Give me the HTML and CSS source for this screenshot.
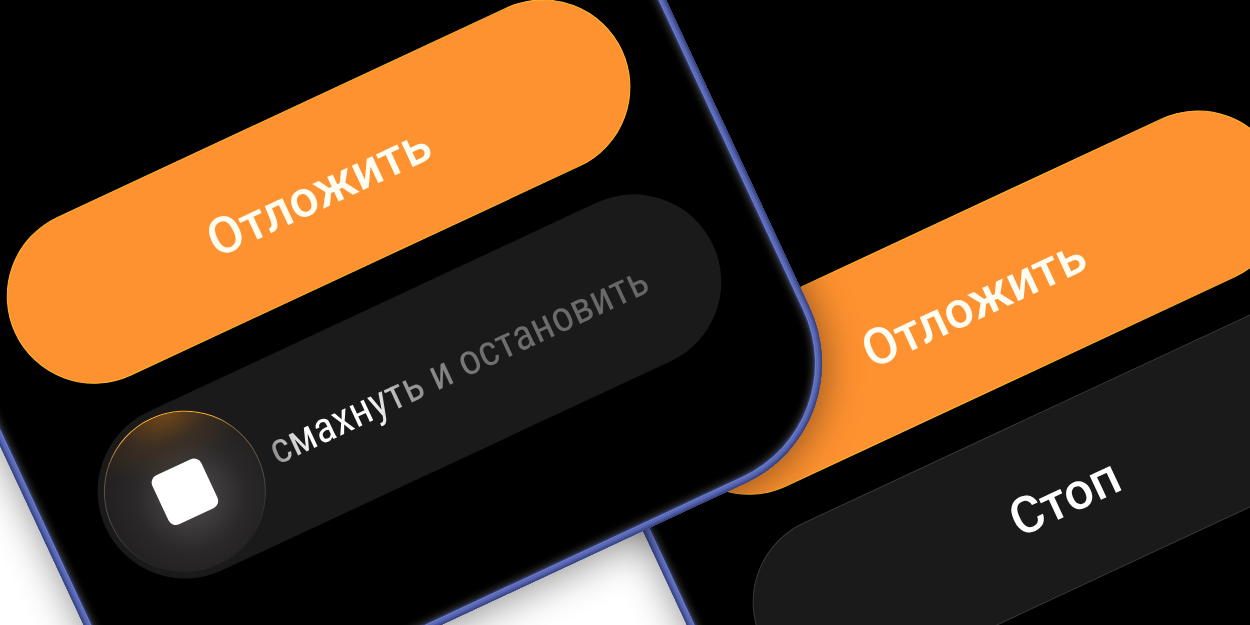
FILE: index.html
```
<!DOCTYPE html>
<html lang="ru">
<head>
    <meta charset="UTF-8">
    <meta name="viewport" content="width=device-width, initial-scale=1.0">
    <title>Будильник</title>
    <link rel="stylesheet" href="styles.css">
</head>
<body>

<main class="canvas">
    <section class="phone phone-back">
        <button class="pill snooze" type="button">Отложить</button>
        <button class="pill stop" type="button">Стоп</button>
    </section>

    <section class="phone phone-front">
        <button class="pill snooze" type="button">Отложить</button>
        <div class="pill slider">
            <button class="knob" type="button" aria-labelledby="swipe-text">
                <span class="stop-icon"></span>
            </button>
            <span class="swipe-text" id="swipe-text">смахнуть и остановить</span>
        </div>
    </section>
</main>

</body>
</html>
```
FILE: styles.css
```
body {
    margin: 0;
    background: #fff;
    font-family: Roboto, "Liberation Sans", sans-serif;
}
.canvas {
    position: relative;
    height: 100vh;
    overflow: hidden;
}

/* phones */
.phone {
    position: absolute;
    box-sizing: border-box;
    width: 792px;
    height: 1100px;
    padding: 0 61px 142px;
    display: flex;
    flex-direction: column;
    justify-content: flex-end;
    gap: 40px;
    border-radius: 132px;
    background: #000;
    transform: rotate(-25deg);
    box-shadow:
        inset 0 0 0 1px #35407a,
        inset 0 0 1px 3px #46549a,
        inset 0 0 1px 6px #5b6ab8,
        inset 0 0 1px 7px #7988d2,
        inset 0 0 1px 9px #262e52,
        inset 0 0 6px 11px #2c2c2a,
        0 4px 40px rgba(0, 0, 0, 0.45);
}
.phone-front {
    left: -122px;
    top: -454px;
}
.phone-back {
    left: 533px;
    top: -343px;
}

/* buttons */
.pill {
    box-sizing: border-box;
    height: 175px;
    padding: 0;
    border: 0;
    border-radius: 88px;
    font-family: inherit;
    font-size: 51px;
    font-weight: 500;
    color: #fff;
}
.snooze {
    background: #ff9230;
    border: 1px solid #ffb62e;
    color: #fffcf2;
}
.stop {
    background: #1a1a1a;
    border: 1px solid #383838;
}

/* swipe to stop */
.slider {
    display: flex;
    align-items: center;
    gap: 14px;
    padding: 0 6px;
    background: #1a1a1a;
}
.knob {
    flex: none;
    display: flex;
    align-items: center;
    justify-content: center;
    width: 162px;
    height: 162px;
    padding: 0;
    border: 1px solid transparent;
    border-radius: 50%;
    background:
        radial-gradient(ellipse 100px 60px at 60% 0, rgba(140, 85, 20, 0.75), rgba(90, 60, 30, 0.4) 50%, transparent) padding-box,
        radial-gradient(circle at 52% 54%, #403e3e 20%, #2a2828 46%, #222020 70%, #1c1c1c) padding-box,
        radial-gradient(circle 160px at 58% 0, #ffb02e 30%, #7a5a3a 48%, #4a4a4a 75%, #1c1c1c) border-box;
}
.stop-icon {
    width: 54px;
    height: 54px;
    border-radius: 8px;
    background: #fff;
}
.swipe-text {
    font-family: "Roboto Condensed", Roboto, sans-serif;
    font-size: 43px;
    font-weight: 400;
    color: transparent;
    background: linear-gradient(90deg, #8a8a8a, #bbb 4%, #fff 10%, #fff 26%, #9a9a9a 36%, #707070 55%, #666);
    -webkit-background-clip: text;
    background-clip: text;
}
```
